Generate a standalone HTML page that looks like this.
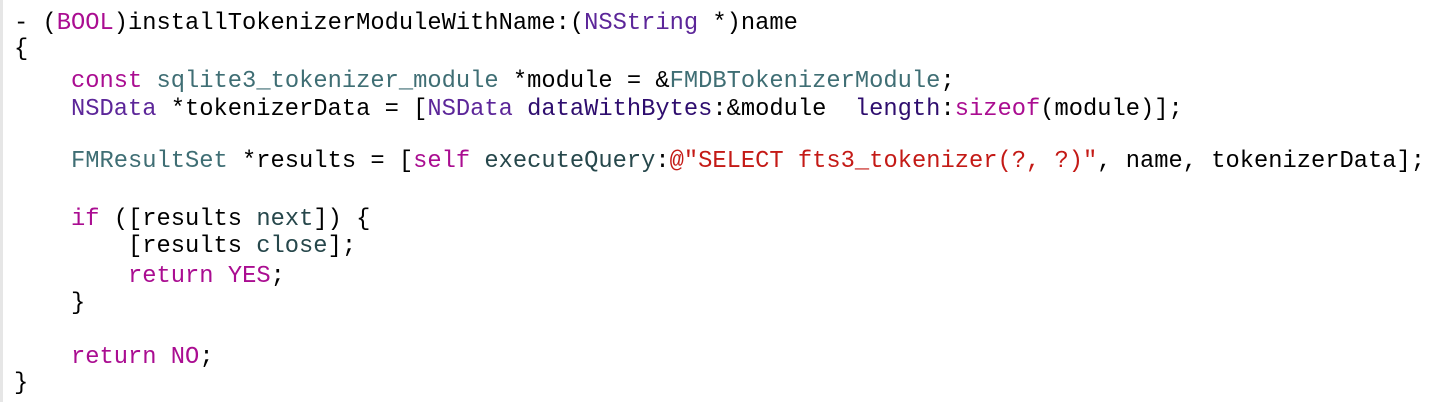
<!DOCTYPE html>
<html><head><meta charset="utf-8"><style>
html,body{margin:0;padding:0;background:#fff;width:1454px;height:402px;overflow:hidden}
body{border-left:3px solid #e6e6e6;box-sizing:border-box}
div{position:absolute;left:14px;white-space:pre;font-family:"Liberation Mono",monospace;font-size:23.75px;line-height:26px;height:26px;color:#000}
.k{color:#aa0d91}.t{color:#5c2699}.p{color:#3f6e74}.s{color:#c41a16}.m{color:#2e0d6e}.n{color:#26474b}
</style></head><body>
<div style="top:11px">- (<span class="k">BOOL</span>)installTokenizerModuleWithName:(<span class="t">NSString</span> *)name</div>
<div style="top:37px">{</div>
<div style="top:69px">    <span class="k">const</span> <span class="p">sqlite3_tokenizer_module</span> *module = &amp;<span class="p">FMDBTokenizerModule</span>;</div>
<div style="top:97px">    <span class="t">NSData</span> *tokenizerData = [<span class="t">NSData</span> <span class="m">dataWithBytes</span>:&amp;module  <span class="m">length</span>:<span class="k">sizeof</span>(module)];</div>
<div style="top:149px">    <span class="p">FMResultSet</span> *results = [<span class="k">self</span> <span class="n">executeQuery</span>:<span class="s">@"SELECT fts3_tokenizer(?, ?)"</span>, name, tokenizerData];</div>
<div style="top:207px">    <span class="k">if</span> ([results <span class="n">next</span>]) {</div>
<div style="top:234px">        [results <span class="n">close</span>];</div>
<div style="top:264px">        <span class="k">return</span> <span class="k">YES</span>;</div>
<div style="top:291px">    }</div>
<div style="top:345px">    <span class="k">return</span> <span class="k">NO</span>;</div>
<div style="top:371px">}</div>
</body></html>
